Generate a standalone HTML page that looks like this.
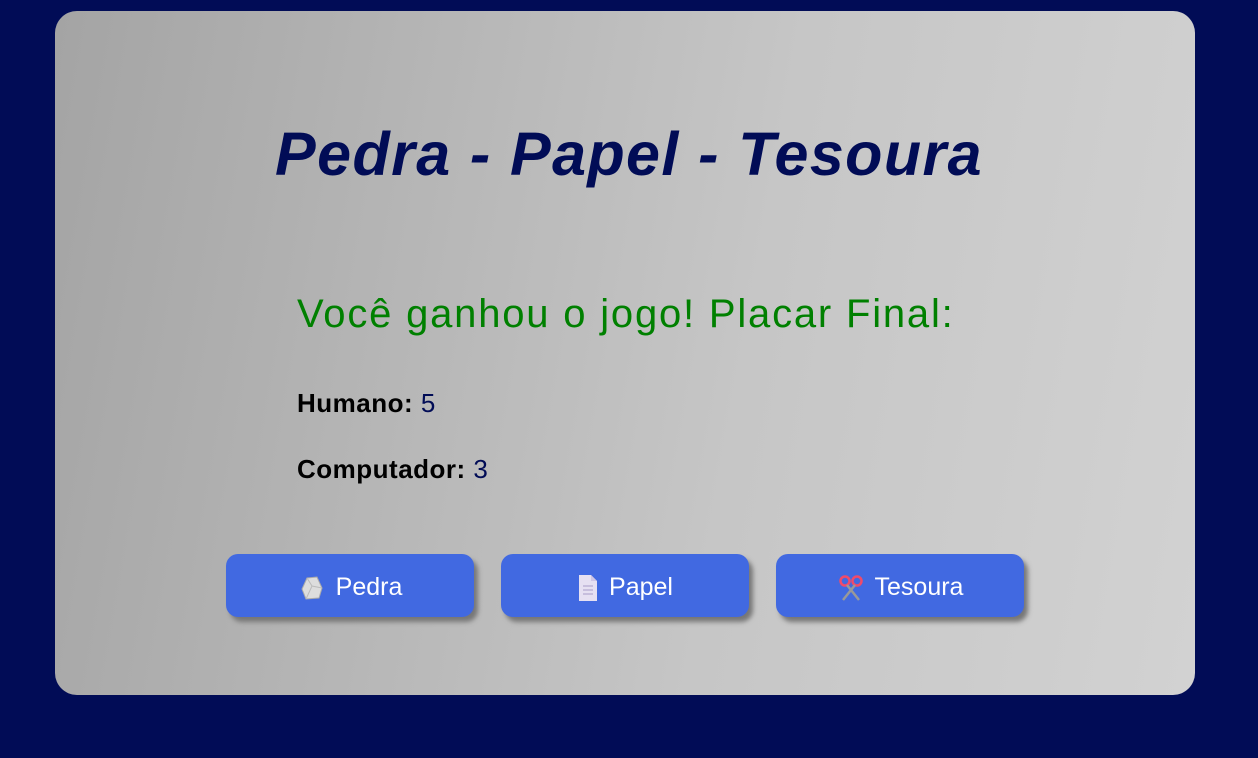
<!DOCTYPE html>
<html><head><meta charset="utf-8"><style>
body{margin:0;background:#010c56;width:1258px;height:758px;overflow:hidden;font-family:"Liberation Sans",sans-serif}
.card{position:absolute;left:55px;top:11px;width:1140px;height:684px;border-radius:22px;background:linear-gradient(100deg,#a4a4a4 0%,#c6c6c6 60%,#d2d2d2 100%)}
h1{position:absolute;left:0;width:1258px;top:119px;margin:0;text-align:center;font-size:61px;font-style:italic;font-weight:bold;color:#010c56;letter-spacing:1.4px}
.res{position:absolute;left:297px;top:292px;font-size:40px;color:#008000;margin:0;font-weight:normal;letter-spacing:1.8px}
.p{position:absolute;left:297px;font-size:26px;font-weight:bold;color:#000;letter-spacing:0.5px}
.p span{color:#010c56;font-weight:normal}
.btn{position:absolute;top:554px;width:248px;height:63px;border-radius:12px;background:#4169e1;color:#fff;font-size:25px;display:flex;align-items:center;justify-content:center;box-shadow:4px 5px 5px #777;padding-top:4px;box-sizing:border-box}
.btn svg{margin-right:10px}
</style></head><body>
<div class="card"></div>
<h1>Pedra - Papel - Tesoura</h1>
<div class="res">Você ganhou o jogo! Placar Final:</div>
<div class="p" style="top:388px">Humano: <span>5</span></div>
<div class="p" style="top:454px">Computador: <span>3</span></div>
<div class="btn" style="left:226px"><svg width="28" height="28" viewBox="0 0 28 28"><path d="M9 4 L19 3 L24 14 L21 24 L8 25 L4 15 Z" fill="#ddd" stroke="#aaa"/><path d="M9 4 L14 12 L24 14 M14 12 L8 25" stroke="#bbb" fill="none"/></svg>Pedra</div>
<div class="btn" style="left:501px"><svg width="22" height="28" viewBox="0 0 22 28"><path d="M2 1 H14 L20 7 V27 H2 Z" fill="#e6e0f2"/><path d="M14 1 V7 H20" fill="#cfc6e6"/><path d="M6 12 H16 M6 16 H16 M6 20 H16" stroke="#a89cc8"/></svg>Papel</div>
<div class="btn" style="left:776px"><svg width="28" height="28" viewBox="0 0 28 28"><circle cx="8" cy="7" r="4.5" fill="none" stroke="#f04a6a" stroke-width="2.5"/><circle cx="20" cy="7" r="4.5" fill="none" stroke="#f04a6a" stroke-width="2.5"/><path d="M10 11 L22 26 M18 11 L6 26" stroke="#999" stroke-width="2.5"/></svg>Tesoura</div>
</body></html>
